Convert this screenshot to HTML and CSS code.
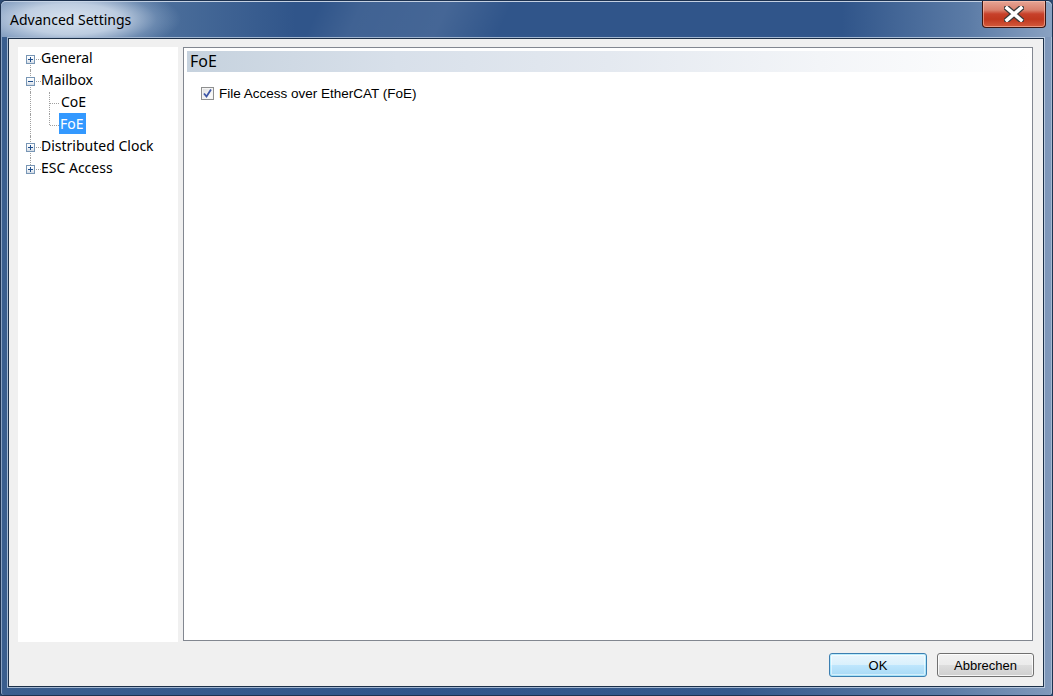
FILE: index.html
```html
<!DOCTYPE html>
<html>
<head>
<meta charset="utf-8">
<title>Advanced Settings</title>
<link rel="stylesheet" href="styles.css">
</head>
<body>
<div class="window">
  <div class="titlebar">
    <span class="glow"></span>
    <span class="title">Advanced Settings</span>
    <button class="close" aria-label="Close">
      <svg width="20" height="16" viewBox="0 0 20 16">
        <path d="M3 2 L17 14 M17 2 L3 14" stroke="#3a3a3a" stroke-width="6" stroke-linecap="square" fill="none"/>
        <path d="M3 2 L17 14 M17 2 L3 14" stroke="#ffffff" stroke-width="3.6" stroke-linecap="square" fill="none"/>
      </svg>
    </button>
  </div>
  <div class="client">
    <div class="main">
      <div class="tree">
        <div class="row l0 first">
          <span class="vline"></span><span class="hline"></span>
          <span class="exp"><svg width="9" height="9" viewBox="0 0 9 9"><path d="M2 4.5h5M4.5 2v5" stroke="#1f4e8c" stroke-width="1" shape-rendering="crispEdges"/></svg></span>
          <span class="label">General</span>
        </div>
        <div class="row l0">
          <span class="vline"></span><span class="hline"></span>
          <span class="exp"><svg width="9" height="9" viewBox="0 0 9 9"><path d="M2 4.5h5" stroke="#1f4e8c" stroke-width="1" shape-rendering="crispEdges"/></svg></span>
          <span class="label">Mailbox</span>
        </div>
        <div class="row l1">
          <span class="vline0"></span>
          <span class="vline"></span><span class="hline"></span>
          <span class="label">CoE</span>
        </div>
        <div class="row l1 last">
          <span class="vline0"></span>
          <span class="vline"></span><span class="hline"></span>
          <span class="label selected">FoE</span>
        </div>
        <div class="row l0">
          <span class="vline"></span><span class="hline"></span>
          <span class="exp"><svg width="9" height="9" viewBox="0 0 9 9"><path d="M2 4.5h5M4.5 2v5" stroke="#1f4e8c" stroke-width="1" shape-rendering="crispEdges"/></svg></span>
          <span class="label">Distributed Clock</span>
        </div>
        <div class="row l0 last">
          <span class="vline"></span><span class="hline"></span>
          <span class="exp"><svg width="9" height="9" viewBox="0 0 9 9"><path d="M2 4.5h5M4.5 2v5" stroke="#1f4e8c" stroke-width="1" shape-rendering="crispEdges"/></svg></span>
          <span class="label">ESC Access</span>
        </div>
      </div>
      <div class="panel">
        <div class="header">FoE</div>
        <label class="check">
          <span class="box">
            <svg width="11" height="11" viewBox="0 0 11 11"><path d="M2 5.5 L4.5 8.5 L9 1.5" stroke="#3d56a6" stroke-width="1.8" fill="none"/></svg>
          </span>
          <span class="check-text">File Access over EtherCAT (FoE)</span>
        </label>
      </div>
    </div>
    <div class="buttons">
      <button class="btn default">OK</button>
      <button class="btn">Abbrechen</button>
    </div>
  </div>
</div>
</body>
</html>
```

FILE: styles.css
```css
html, body {
  margin: 0;
  padding: 0;
  background: #2c4a72;
}
body {
  width: 1053px;
  height: 696px;
  overflow: hidden;
}
.window {
  width: 1053px;
  height: 696px;
  box-sizing: border-box;
  display: flex;
  flex-direction: column;
  padding: 0 8px 8px 7px;
  border: 1px solid #1d3250;
  border-radius: 6px 6px 3px 3px;
  background: linear-gradient(to right, #3a5e8e 0%, #30558a 40%, #34598c 70%, #5c7ca6 90%, #8199bb 100%);
  box-shadow: inset 0 1px 0 #c3d0e2, inset 1px 0 0 #8aa2c2, inset -1px 0 0 #a8bad2;
}
.titlebar {
  height: 36px;
  position: relative;
  display: flex;
  align-items: center;
  margin: 0 -8px 0 -7px;
  padding-left: 9px;
  background:
    linear-gradient(115deg, rgba(255,255,255,0) 30%, rgba(255,255,255,0.08) 34%, rgba(255,255,255,0.1) 42%, rgba(255,255,255,0) 48%),
    linear-gradient(to right, #7a95b9 0%, #4a6d9a 16%, #30558a 28%, #30558a 80%, #5b7ba6 92%, #8aa2c2 100%);
  border-radius: 5px 5px 0 0;
  box-shadow: inset 0 1px 0 #c3d0e2;
  overflow: hidden;
}
.glow {
  position: absolute;
  left: -40px;
  top: -16px;
  width: 220px;
  height: 68px;
  background: radial-gradient(closest-side, rgba(222,232,243,0.95) 0%, rgba(205,218,234,0.85) 45%, rgba(170,192,218,0.3) 78%, rgba(140,165,200,0) 100%);
}
.title {
  position: relative;
  font-family: "Noto Sans", "Open Sans", sans-serif;
  font-size: 14px;
  color: #000;
  margin-top: 1px;
}
.close {
  position: absolute;
  right: 6px;
  top: 0;
  width: 64px;
  height: 27px;
  padding: 0;
  border: 1px solid #3b1511;
  border-top: none;
  border-radius: 0 0 4px 4px;
  background: linear-gradient(to bottom, #e6a595 0%, #d9806c 35%, #c7402a 50%, #c0381f 70%, #d45a3c 100%);
  box-shadow: inset 0 0 0 1px rgba(255,200,180,0.55);
  display: flex;
  align-items: center;
  justify-content: center;
}
.client {
  flex: 1;
  display: flex;
  flex-direction: column;
  background: #f0f0f0;
  border: 1px solid #1c3049;
  box-shadow: 0 0 0 1px rgba(210,222,238,0.7);
  padding: 8px 10px 9px 9px;
  margin-top: 1px;
}
.main {
  flex: 1;
  display: flex;
  gap: 5px;
  min-height: 0;
}
.tree {
  width: 160px;
  background: #fff;
  padding-top: 1px;
  box-sizing: border-box;
  font-family: "Noto Sans", "Open Sans", sans-serif;
  font-size: 14px;
  color: #000;
}
.row {
  position: relative;
  height: 22px;
  display: flex;
  align-items: center;
}
.row.l0 { padding-left: 21px; }
.row.l1 { padding-left: 41px; }
.vline, .vline0 {
  position: absolute;
  top: 0;
  bottom: 0;
  border-left: 1px dotted #a0a0a0;
}
.l0 .vline { left: 12px; }
.l0.first .vline { top: 11px; }
.l0.last .vline { bottom: 11px; }
.vline0 { left: 12px; }
.l1 .vline { left: 31px; }
.l1.last .vline { bottom: 11px; }
.hline {
  position: absolute;
  top: 11px;
  border-top: 1px dotted #a0a0a0;
}
.l0 .hline { left: 13px; width: 10px; }
.l1 .hline { left: 32px; width: 9px; }
.exp {
  position: absolute;
  left: 8px;
  top: 7px;
  width: 9px;
  height: 9px;
  box-sizing: border-box;
  border: 1px solid #7896b5;
  background: linear-gradient(to bottom, #ffffff 0%, #eef2f6 60%, #d3dbe5 100%);
  display: flex;
}
.exp svg {
  position: absolute;
  left: -1px;
  top: -1px;
}
.label {
  line-height: 21px;
  height: 21px;
  padding: 0 2px;
  margin-top: -3px;
}
.label.selected {
  background: #3399ff;
  color: #fff;
  padding: 0 2px 0 1px;
}
.panel {
  flex: 1;
  background: #fff;
  border: 1px solid #828790;
  padding: 3px 1px 3px 3px;
  margin-bottom: 1px;
}
.header {
  height: 21px;
  line-height: 21px;
  padding-left: 3px;
  font-family: "Noto Sans", "Open Sans", sans-serif;
  font-size: 16px;
  color: #000;
  background: linear-gradient(to right, #c6d2de 0%, #d8e0ea 25%, #e4e9f0 50%, #f3f5f8 75%, #ffffff 100%);
}
.check {
  display: flex;
  align-items: center;
  margin: 14px 0 0 14px;
  font-family: "Liberation Sans", Arial, sans-serif;
  font-size: 13.5px;
  color: #000;
}
.box {
  width: 13px;
  height: 13px;
  box-sizing: border-box;
  border: 1px solid #8e8f8f;
  background: linear-gradient(135deg, #dcdcdc 0%, #f4f4f4 60%, #ffffff 100%);
  box-shadow: inset 0 0 0 1px #f4f4f4;
  display: flex;
  align-items: center;
  justify-content: center;
  margin-right: 5px;
}
.buttons {
  display: flex;
  justify-content: flex-end;
  gap: 10px;
  margin-top: 11px;
  margin-right: -1px;
}
.btn {
  width: 97px;
  height: 24px;
  padding: 0;
  font-family: "Liberation Sans", Arial, sans-serif;
  font-size: 13px;
  color: #000;
  border: 1px solid #707070;
  border-radius: 3px;
  background: linear-gradient(to bottom, #f2f2f2 0%, #ebebeb 50%, #dddddd 51%, #cfcfcf 100%);
  box-shadow: inset 0 0 0 1px rgba(255,255,255,0.8);
}
.btn.default {
  width: 98px;
  border-color: #3c7fb1;
  background: linear-gradient(to bottom, #eaf6fd 0%, #d9f0fc 50%, #bee6fd 51%, #a7d9f5 100%);
  box-shadow: inset 0 0 0 1px #48d1fd55, inset 0 0 0 2px rgba(255,255,255,0.5);
}
```
